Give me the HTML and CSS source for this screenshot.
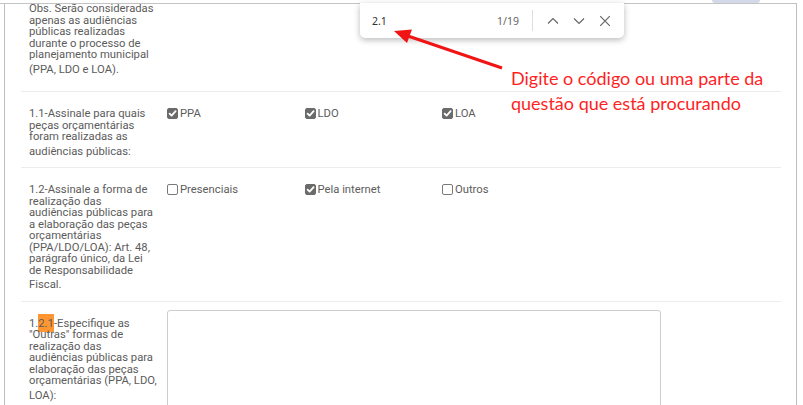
FILE: index.html
```html
<!DOCTYPE html>
<html lang="pt-BR">
<head>
<meta charset="utf-8">
<title>Audiências públicas</title>
<link rel="stylesheet" href="styles.css">
</head>
<body>
<div class="tab-hint"></div>
<div class="topline"></div>
<div class="window">
  <div class="content">
    <div class="row row-first">
      <div class="label">
        <span class="lines">Obs. Serão consideradas<br>apenas as audiências<br>públicas realizadas<br>durante o processo de<br>planejamento municipal</span>
        <span class="last">(PPA, LDO e LOA).</span>
      </div>
      <div></div>
    </div>

    <div class="row">
      <div class="label">
        <span class="lines">1.1-Assinale para quais<br>peças orçamentárias<br>foram realizadas as</span>
        <span class="last">audiências públicas:</span>
      </div>
      <div class="options">
        <div class="opt"><span class="cb checked"><svg viewBox="0 0 11 11"><path d="M2.6 5.6 L4.6 7.6 L8.6 3.2"/></svg></span>PPA</div>
        <div class="opt"><span class="cb checked"><svg viewBox="0 0 11 11"><path d="M2.6 5.6 L4.6 7.6 L8.6 3.2"/></svg></span>LDO</div>
        <div class="opt"><span class="cb checked"><svg viewBox="0 0 11 11"><path d="M2.6 5.6 L4.6 7.6 L8.6 3.2"/></svg></span>LOA</div>
      </div>
    </div>

    <div class="row">
      <div class="label">
        <span class="lines">1.2-Assinale a forma de<br>realização das<br>audiências públicas para<br>a elaboração das peças<br>orçamentárias<br>(PPA/LDO/LOA): Art. 48,<br>parágrafo único, da Lei<br>de Responsabilidade</span>
        <span class="last">Fiscal.</span>
      </div>
      <div class="options">
        <div class="opt"><span class="cb"></span>Presenciais</div>
        <div class="opt"><span class="cb checked"><svg viewBox="0 0 11 11"><path d="M2.6 5.6 L4.6 7.6 L8.6 3.2"/></svg></span>Pela internet</div>
        <div class="opt"><span class="cb"></span>Outros</div>
      </div>
    </div>

    <div class="row">
      <div class="label">
        <span class="lines">1.<mark class="hit">2.1</mark>-Especifique as<br>"Outras" formas de<br>realização das<br>audiências públicas para<br>elaboração das peças<br>orçamentárias (PPA, LDO,</span>
        <span class="last">LOA):</span>
      </div>
      <div class="field">
        <textarea class="answer"></textarea>
      </div>
    </div>
  </div>
</div>

<div class="findbar">
  <span class="find-query">2.1</span>
  <span class="find-count">1/19</span>
  <span class="find-sep"></span>
  <span class="find-btn"><svg viewBox="0 0 12 12"><path d="M1 8.5 L6 3.5 L11 8.5"/></svg></span>
  <span class="find-btn"><svg viewBox="0 0 12 12"><path d="M1 3.5 L6 8.5 L11 3.5"/></svg></span>
  <span class="find-btn"><svg viewBox="0 0 12 12"><path d="M1.2 1.2 L10.8 10.8 M10.8 1.2 L1.2 10.8"/></svg></span>
</div>

<svg class="arrow" viewBox="0 0 803 405" width="803" height="405">
  <line x1="502" y1="68" x2="408" y2="36" />
  <polygon points="394,31 412,29.5 407,43" />
</svg>

<p class="note">Digite o código ou uma parte da<br>questão que está procurando</p>
</body>
</html>
```

FILE: styles.css
```css
html, body {
  margin: 0;
  padding: 0;
  background: #fff;
}

body {
  width: 803px;
  height: 405px;
  overflow: hidden;
  position: relative;
  font-family: Roboto, "Liberation Sans", sans-serif;
}

.tab-hint {
  position: absolute;
  left: 712px;
  top: 0;
  width: 48px;
  height: 3px;
  background: #d3d9e8;
  border-radius: 0 0 3px 3px;
}

.topline {
  margin-top: 3px;
  width: 797px;
  height: 1px;
  background: #c4c4c4;
}

.window {
  margin-left: 4px;
  width: 791px;
  height: 401px;
  border-left: 1px solid #bdbdbd;
  border-right: 1px solid #bdbdbd;
  overflow: hidden;
}

.content {
  padding: 0 15px 0 16px;
  margin-top: -1px;
}

.row {
  display: grid;
  grid-template-columns: 130px 1fr;
  column-gap: 8px;
  padding: 8px 0 7px 8px;
  border-bottom: 1px solid #ececec;
}

.row-first {
  padding-top: 0;
  padding-bottom: 13px;
}

.label {
  padding-top: 8px;
  font-size: 11.25px;
  color: #5c5c5c;
  white-space: nowrap;
}

.row-first .label {
  padding-top: 0;
}

.label .lines {
  display: block;
  line-height: 11.5px;
}

.label .last {
  display: block;
  line-height: 17.5px;
}

.hit {
  background: #ff9632;
  color: #5c5c5c;
  padding: 3px 0 2px;
}

.options {
  padding-top: 8px;
  display: grid;
  grid-template-columns: repeat(3, 137.5px);
  align-items: start;
}

.opt {
  display: flex;
  align-items: center;
  gap: 2px;
  height: 11.5px;
  font-size: 11.25px;
  color: #5c5c5c;
}

.cb {
  box-sizing: border-box;
  width: 11px;
  height: 11px;
  border: 1px solid #7a7a7a;
  border-radius: 2px;
  background: #fff;
  flex: none;
  display: flex;
}

.cb.checked {
  background: #6b6b6b;
  border-color: #6b6b6b;
}

.cb svg {
  width: 11px;
  height: 11px;
  margin: -1px;
  fill: none;
  stroke: #fff;
  stroke-width: 1.8;
  stroke-linecap: round;
  stroke-linejoin: round;
}

.field {
  display: flex;
}

.answer {
  box-sizing: border-box;
  width: 494px;
  height: 104px;
  border: 1px solid #cdcdcd;
  border-radius: 3px;
  margin: 0;
  font: inherit;
}

.findbar {
  position: absolute;
  left: 360px;
  top: 3px;
  width: 264px;
  height: 35px;
  box-sizing: border-box;
  background: #fff;
  border-radius: 0 0 5px 5px;
  box-shadow: 0 2px 6px rgba(0, 0, 0, 0.28);
  display: flex;
  align-items: center;
  padding: 0 13px 0 12px;
  font-family: "Noto Sans", "Open Sans", sans-serif;
  font-size: 10.5px;
}

.find-query {
  color: #333;
  flex: 1;
}

.find-count {
  color: #666;
  margin-right: 13px;
}

.find-sep {
  width: 1px;
  height: 21px;
  background: #dedede;
  margin-right: 14px;
}

.find-btn {
  width: 12px;
  height: 12px;
  display: flex;
  margin-right: 14px;
}

.find-btn:last-child {
  margin-right: 0;
}

.find-btn svg {
  width: 12px;
  height: 12px;
  fill: none;
  stroke: #666;
  stroke-width: 1.2;
}

.arrow {
  position: absolute;
  left: 0;
  top: 0;
  pointer-events: none;
}

.arrow line {
  stroke: #f01414;
  stroke-width: 3;
}

.arrow polygon {
  fill: #f01414;
}

.note {
  position: absolute;
  left: 511px;
  top: 66px;
  margin: 0;
  font-family: Lato, "Open Sans", sans-serif;
  font-size: 18px;
  line-height: 25px;
  color: #ff1f1f;
}
```
